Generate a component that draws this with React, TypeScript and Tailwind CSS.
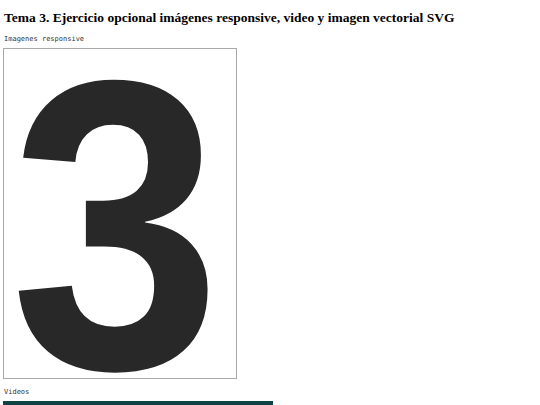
export default function App() {
  return (
    <div className="bg-white h-[405px] overflow-hidden px-[4px] pt-[10px]">
      <h1 className="text-[13.5px] font-bold leading-[16px] text-black font-['Liberation_Serif',serif]">
        Tema 3. Ejercicio opcional imágenes responsive, video y imagen vectorial SVG
      </h1>
      <p className="mt-[9px] text-[7px] leading-[9px] text-[#333] font-['DejaVu_Sans_Mono',monospace]">
        Imagenes responsive
      </p>
      <div className="mt-[4px] ml-[-1px] w-[234px] h-[331px] border border-[#a9a9a9] bg-white">
        <svg width="232" height="329" viewBox="0 0 232 329">
          <text
            x="0"
            y="0"
            fill="#282828"
            fontWeight="700"
            fontSize="413"
            fontFamily="'Liberation Sans', sans-serif"
            transform="translate(6 319) scale(0.92 1)"
          >
            3
          </text>
        </svg>
      </div>
      <p className="mt-[9px] text-[7px] leading-[9px] text-[#333] font-['DejaVu_Sans_Mono',monospace]">
        Videos
      </p>
      <div className="mt-[4px] ml-[-1px] w-[270px] h-[10px] bg-[#0f4242]" />
    </div>
  );
}
